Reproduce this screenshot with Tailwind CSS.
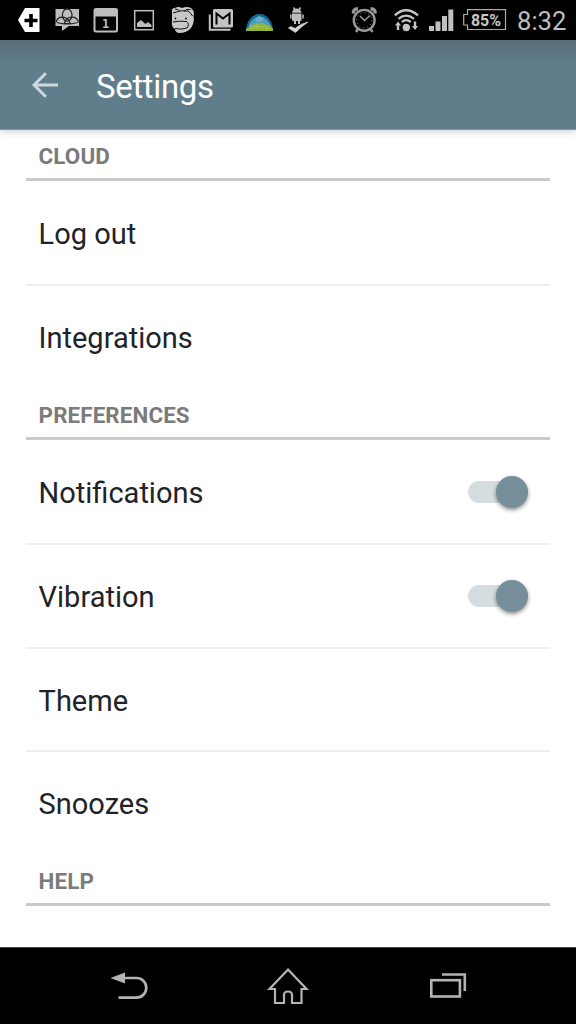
<!DOCTYPE html>
<html lang="en">
<head>
<meta charset="utf-8">
<title>Settings</title>
<script src="https://cdn.jsdelivr.net/npm/@tailwindcss/browser@4"></script>
</head>
<body class="w-[576px] h-[1024px] overflow-hidden bg-white flex flex-col font-['Roboto',sans-serif]">

<!-- Status bar -->
<div class="h-10 shrink-0 bg-black flex items-center text-[#bdbdbd]">
  <svg class="w-12 h-10 shrink-0" viewBox="0 0 48 40"><path d="M25 8H39.5V32H25L18 20Z" fill="#fff"/><path d="M31 14V27M24.5 20.5H37.5" stroke="#000" stroke-width="3.6"/></svg>
  <svg class="w-[38px] h-10 shrink-0" viewBox="48 0 38 40"><path d="M55.500 9H79V26H69L62 31V26H55.500Z" fill="#bdbdbd"/><g fill="none" stroke="#222" stroke-width="1.200"><ellipse cx="67.200" cy="15" rx="4.800" ry="6.200"/><path d="M56 22.500Q57 17 63 17.200Q69 18 70 23Q64 25 57 22.500M78.500 22.500Q77.500 17 71.500 17.200Q65.500 18 64.500 23Q70.500 25 77.500 22.500"/></g></svg>
  <svg class="w-10 h-10 shrink-0" viewBox="86 0 40 40"><rect x="94.500" y="9" width="22.500" height="22.500" rx="1.500" fill="none" stroke="#bdbdbd" stroke-width="2"/><path d="M94 9H117.500V16.500H94Z" fill="#bdbdbd"/><text x="105.500" y="28" text-anchor="middle" font-family="DejaVu Sans Mono" font-weight="700" font-size="12" fill="#bdbdbd">1</text></svg>
  <svg class="w-9 h-10 shrink-0" viewBox="126 0 36 40"><rect x="134.700" y="10.700" width="18.600" height="19" fill="none" stroke="#bdbdbd" stroke-width="1.500"/><path d="M137 27V23L141 20L145.500 24L148 22L151.500 25V27Z" fill="#bdbdbd"/></svg>
  <svg class="w-10 h-10 shrink-0" viewBox="162 0 40 40"><path d="M172 13Q171 8 175 8Q178 6 182 8Q187 6 191 8Q195 11 193.500 16Q195 22 191 28Q187 33 179 33Q175 32 175 29Q171 27 172 21Z" fill="#c8c8c8"/><g fill="none" stroke="#111" stroke-width="1"><path d="M173 13Q181 9.500 188 11Q191 13 192.500 16M175 9Q179 9 180 11.500M190.500 9.500Q186 8.500 184 11.500M173 22Q180 20.500 186.500 21.500Q190 24 187 28Q181 30 175 28.500"/></g><circle cx="175.500" cy="18.500" r=".9" fill="#111"/><circle cx="186" cy="18.500" r=".9" fill="#111"/></svg>
  <svg class="w-[38px] h-10 shrink-0" viewBox="202 0 38 40"><path d="M209.800 14.500V29.800H230.500" fill="none" stroke="#c4c4c4" stroke-width="2"/><rect x="213" y="9" width="20" height="18.500" rx="1.500" fill="#c4c4c4"/><path d="M216.500 24.500V13.500L223 18.500L229.500 13.500V24.500" fill="none" stroke="#000" stroke-width="2"/></svg>
  <svg class="w-10 h-10 shrink-0" viewBox="240 0 40 40"><path d="M246 31A13.500 17 0 0 1 273 31Z" fill="#136b9b"/><path d="M249 25A11 11 0 0 1 270 25Z" fill="#4c9dbb"/><path d="M255 19L259 16L264 18L262 21L257 22Z" fill="#69afc8"/><path d="M246 31V29L249 27V25H253L256 23H263L267 25H270L273 29V31Z" fill="#90b43e"/><path d="M252 31V27H267V31M257 27V24" fill="none" stroke="#b5ce69" stroke-width=".7"/></svg>
  <svg class="w-10 h-10 shrink-0" viewBox="280 0 40 40"><path d="M292 12.800A4.700 4.300 0 0 1 301.500 12.800ZM292 13.600H301.500V20Q301.500 21 300.500 21H300V24H298V21H296V24H294V21H293.500Q292 21 292 20Z" fill="#bdbdbd"/><path d="M293.500 7.500L295 10M300.500 7.500L299 10M290.800 14.500V18.500M303 14.500V18.500" stroke="#bdbdbd" stroke-width="1.500"/><path d="M288.500 28L291 26.500L295 28.500Q301 23.500 308 22Q302 26 295.500 32.500Z" fill="#d4d4d4" stroke="#d4d4d4" stroke-width=".7"/></svg>

  <svg class="w-10 h-10 shrink-0 ml-6" viewBox="344 0 40 40"><g fill="none" stroke="#999" stroke-width="2.400"><circle cx="364.200" cy="20.300" r="10.400"/><path d="M360 16L364.500 20.500L370 15.500" stroke-width="1.500"/><path d="M353.500 13.500Q352.500 9 358 8.800M370.500 8.800Q376 9 375 13.500" stroke-width="3.400"/><path d="M358 29L356 32M370.500 29L372.500 32" stroke-width="2.500"/></g><circle cx="364.200" cy="20.300" r="7.600" fill="none" stroke="#999" stroke-width="1" stroke-dasharray="1 3"/></svg>
  <svg class="w-[41px] h-10 shrink-0" viewBox="384 0 41 40"><g fill="none" stroke="#c4c4c4" stroke-width="2.300"><path d="M394.800 15.300Q406 5.200 418 15.300M398.500 18.800Q406 12.500 414 18.800M401.800 22Q406 18.200 410.800 22"/></g><circle cx="406.300" cy="27.500" r="3.700" fill="#c4c4c4"/><path d="M398 21.500L401 25.500H399.200V30H396.800V25.500H395ZM415 30L418 26H416.200V21.500H413.800V26H412Z" fill="#c4c4c4"/></svg>
  <svg class="w-[33px] h-10 shrink-0" viewBox="425 0 33 40"><path d="M429 26H434V31H429ZM435.500 21.500H440.500V31H435.500ZM442 16H447V31H442ZM448.300 9.500H453.300V31H448.300Z" fill="#c0c0c0"/></svg>
  <svg class="w-[52px] h-10 shrink-0" viewBox="458 0 52 40"><path d="M467.500 9.700H505.500V29.500H467.500V25H463.700V14.500H467.500Z" fill="none" stroke="#aaa" stroke-width="1.200"/><text x="471" y="25.500" font-family="Roboto" font-weight="700" font-size="16.500" textLength="30" lengthAdjust="spacingAndGlyphs" fill="#c8c8c8">85%</text></svg>
  <div class="ml-[7px] text-[25.600px] leading-10 h-10 pt-[1px]">8:32</div>
</div>

<!-- App bar -->
<header class="relative z-10 h-[90px] -mb-px shrink-0 flex items-center bg-[#607d8b] bg-linear-to-b from-[#586c79] to-[#607d8b] to-25% border-b border-[#82979f] shadow-[0_2px_7px_rgba(0,0,0,0.18)]">
  <svg class="ml-[31px] mt-px w-7 h-7" viewBox="0 0 28 28" fill="none" stroke="#cfd8dc" stroke-width="3"><path d="M27 14H3M14.800 2.300L3.100 14L14.800 25.700"/></svg>
  <h1 class="ml-[37px] mt-[4px] text-[33px] tracking-[-0.35px] leading-10 text-white">Settings</h1>
</header>

<!-- Settings list -->
<main class="h-[818px] shrink-0 overflow-hidden px-[25.600px] text-[29px] text-[#212328]">
  <h2 class="h-[52px] pt-[13px] pl-[13px] border-b-3 border-[#cacaca] text-[22.400px] tracking-[0.1px] leading-7 font-bold text-[#7b7b7b]">CLOUD</h2>
  <div class="h-[104.500px] pl-[13px] pt-[5px] flex items-center border-b-2 border-[#eeeeee]">Log out</div>
  <div class="h-[102.500px] pl-[13px] pt-[4px] flex items-center">Integrations</div>
  <h2 class="h-[52px] pt-[13px] pl-[13px] border-b-3 border-[#cacaca] text-[22.400px] tracking-[0.1px] leading-7 font-bold text-[#7b7b7b]">PREFERENCES</h2>
  <div class="h-[105px] pl-[13px] pr-[22.400px] flex items-center justify-between border-b-2 border-[#eeeeee]">
    <span class="pt-[5px]">Notifications</span>
    <div class="w-[60px] h-8 flex items-center"><div class="w-[52px] h-[22px] rounded-full bg-[#d5dde0]"></div><div class="-ml-6 w-8 h-8 shrink-0 rounded-full bg-[#758e9a] shadow-[0_2px_4px_rgba(0,0,0,0.45)]"></div></div>
  </div>
  <div class="h-[103.500px] pl-[13px] pr-[22.400px] flex items-center justify-between border-b-2 border-[#eeeeee]">
    <span class="pt-[3px]">Vibration</span>
    <div class="w-[60px] h-8 flex items-center"><div class="w-[52px] h-[22px] rounded-full bg-[#d5dde0]"></div><div class="-ml-6 w-8 h-8 shrink-0 rounded-full bg-[#758e9a] shadow-[0_2px_4px_rgba(0,0,0,0.45)]"></div></div>
  </div>
  <div class="h-[103.500px] pl-[13px] pt-[4px] flex items-center border-b-2 border-[#eeeeee]">Theme</div>
  <div class="h-[102px] pl-[13px] pt-[4px] flex items-center">Snoozes</div>
  <h2 class="h-[52px] pt-[13px] pl-[13px] border-b-3 border-[#cacaca] text-[22.400px] tracking-[0.1px] leading-7 font-bold text-[#7b7b7b]">HELP</h2>
</main>

<!-- Navigation bar -->
<nav class="h-[77px] shrink-0 bg-black border-t border-[#444] flex items-center justify-center">
  <svg class="w-[160px] h-[76px]" viewBox="48 948 160 76"><path d="M118 978H136.500A9.800 9.800 0 0 1 136.500 997.600H118.500" fill="none" stroke="#b4b4b4" stroke-width="2.600"/><path d="M110.500 978L125 972.500V983.500Z" fill="#b4b4b4"/></svg>
  <svg class="w-[160px] h-[76px]" viewBox="208 948 160 76"><path d="M288 969.500L306.500 989H301.500V1003H292V995Q292 991.500 288 991.500Q284 991.500 284 995V1003H275V989H269.500Z" fill="none" stroke="#b4b4b4" stroke-width="2.200"/></svg>
  <svg class="w-[160px] h-[76px]" viewBox="368 948 160 76" fill="none" stroke="#b4b4b4" stroke-width="2.600"><rect x="431.300" y="980.200" width="28.600" height="16.300"/><path d="M442 974.500H464.800V991"/></svg>
</nav>
</body>
</html>
